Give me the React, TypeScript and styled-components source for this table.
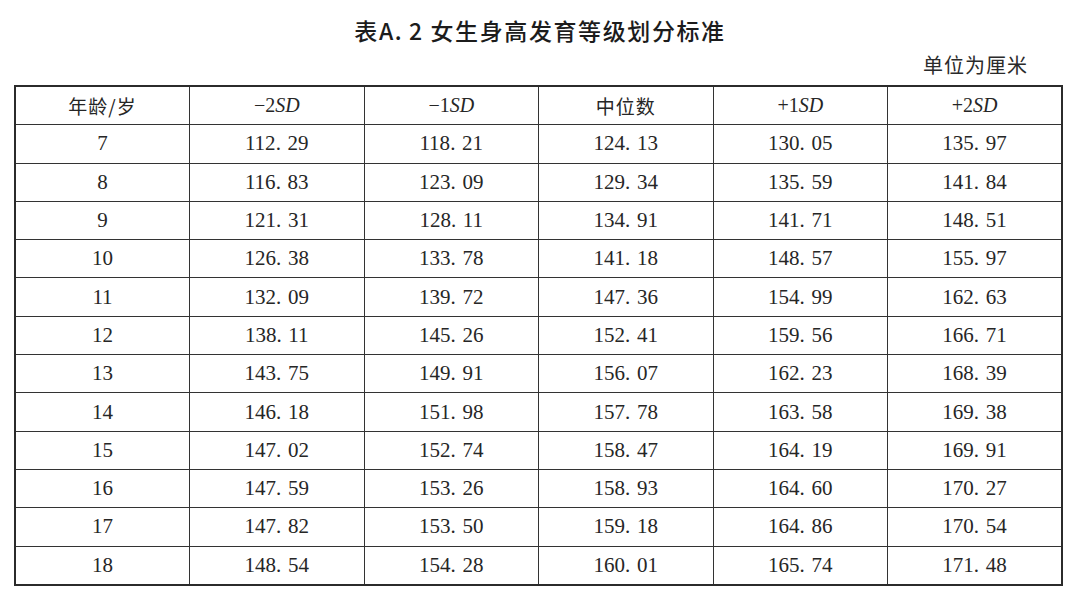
import React from "react";
import styled, { createGlobalStyle } from "styled-components";

const GlobalStyle = createGlobalStyle`
  html, body {
    margin: 0;
    padding: 0;
    background: #ffffff;
  }
  body {
    width: 1080px;
    height: 592px;
    overflow: hidden;
    color: #222222;
    font-family: "Liberation Serif", "Noto Sans CJK SC", serif;
  }
`;

const Page = styled.div`
  width: 1080px;
  display: flex;
  flex-direction: column;
`;

const Title = styled.h1`
  margin: 14px 0 0;
  height: 32px;
  text-align: center;
  font-family: "Noto Sans CJK SC", sans-serif;
  font-weight: 500;
  font-size: 23px;
  line-height: 32px;
  letter-spacing: 1.6px;
  color: #1c1c1c;
`;

const TitleDot = styled.span`
  margin-right: 0.25em;
`;

const Unit = styled.div`
  align-self: flex-end;
  margin: 5px 52px 0 0;
  height: 34px;
  font-family: "Noto Sans CJK SC", sans-serif;
  font-size: 20px;
  line-height: 28px;
  letter-spacing: 1px;
  color: #2a2a2a;
`;

const Table = styled.table`
  margin-left: 14px;
  width: 1049px;
  border-collapse: collapse;
  table-layout: fixed;
  border: 2px solid #2b2b2b;
`;

const Cell = styled.td<{ $head?: boolean }>`
  height: 37.3px;
  padding: 0;
  text-align: center;
  vertical-align: middle;
  border: 1px solid #333333;
  font-family: "Liberation Serif", "Noto Sans CJK SC", serif;
  font-weight: 400;
  font-size: ${(p) => (p.$head ? "20px" : "21px")};
  color: #262626;
  white-space: nowrap;
`;

const Dot = styled.span`
  margin-right: 0.32em;
`;

const Sd = styled.i`
  font-family: "Liberation Serif", serif;
  font-style: italic;
`;

const CjkLabel = styled.span`
  font-family: "Noto Sans CJK SC", sans-serif;
  font-weight: 400;
  font-size: 19px;
  letter-spacing: 1px;
`;

const rows: [number, string[]][] = [
  [7, ["112.29", "118.21", "124.13", "130.05", "135.97"]],
  [8, ["116.83", "123.09", "129.34", "135.59", "141.84"]],
  [9, ["121.31", "128.11", "134.91", "141.71", "148.51"]],
  [10, ["126.38", "133.78", "141.18", "148.57", "155.97"]],
  [11, ["132.09", "139.72", "147.36", "154.99", "162.63"]],
  [12, ["138.11", "145.26", "152.41", "159.56", "166.71"]],
  [13, ["143.75", "149.91", "156.07", "162.23", "168.39"]],
  [14, ["146.18", "151.98", "157.78", "163.58", "169.38"]],
  [15, ["147.02", "152.74", "158.47", "164.19", "169.91"]],
  [16, ["147.59", "153.26", "158.93", "164.60", "170.27"]],
  [17, ["147.82", "153.50", "159.18", "164.86", "170.54"]],
  [18, ["148.54", "154.28", "160.01", "165.74", "171.48"]],
];

const Num = ({ value }: { value: string }) => {
  const [a, b] = value.split(".");
  return (
    <>
      {a}
      <Dot>.</Dot>
      {b}
    </>
  );
};

const SdHead = ({ sign }: { sign: string }) => (
  <>
    {sign}
    <Sd>SD</Sd>
  </>
);

export default function App() {
  return (
    <Page>
      <GlobalStyle />
      <Title>
        表A<TitleDot>.</TitleDot>2 女生身高发育等级划分标准
      </Title>
      <Unit>单位为厘米</Unit>
      <Table>
        <thead>
          <tr>
            <Cell as="th" $head>
              <CjkLabel>年龄/岁</CjkLabel>
            </Cell>
            <Cell as="th" $head>
              <SdHead sign="−2" />
            </Cell>
            <Cell as="th" $head>
              <SdHead sign="−1" />
            </Cell>
            <Cell as="th" $head>
              <CjkLabel>中位数</CjkLabel>
            </Cell>
            <Cell as="th" $head>
              <SdHead sign="+1" />
            </Cell>
            <Cell as="th" $head>
              <SdHead sign="+2" />
            </Cell>
          </tr>
        </thead>
        <tbody>
          {rows.map(([age, vals]) => (
            <tr key={age}>
              <Cell>{age}</Cell>
              {vals.map((v, i) => (
                <Cell key={i}>
                  <Num value={v} />
                </Cell>
              ))}
            </tr>
          ))}
        </tbody>
      </Table>
    </Page>
  );
}
